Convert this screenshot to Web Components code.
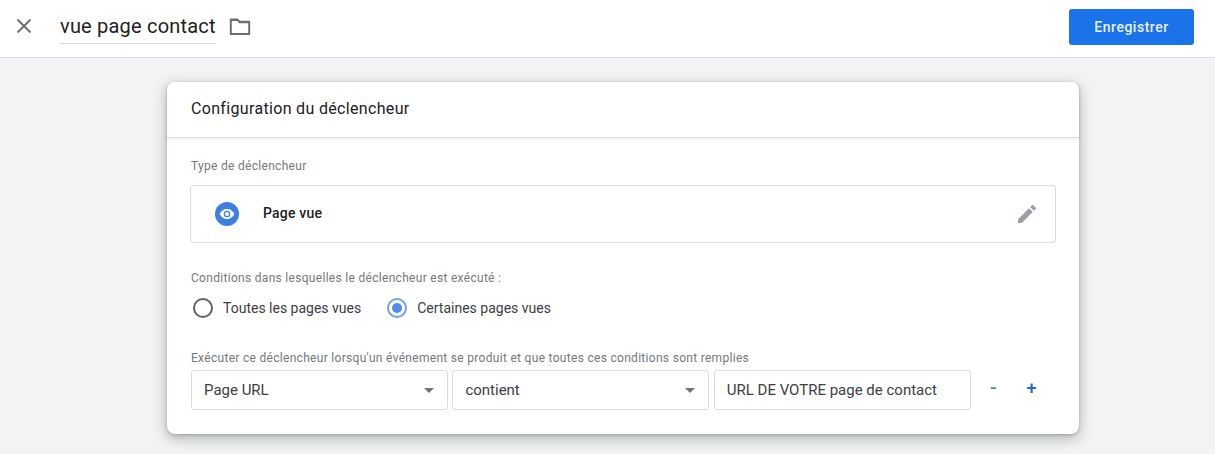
<!DOCTYPE html>
<html lang="fr">
<head>
<meta charset="utf-8">
<title>vue page contact</title>
<style>
    html, body { margin: 0; height: 100%; overflow: hidden; }
    body { background: #f1f3f4; font-family: Roboto, "Liberation Sans", sans-serif; }
</style>
</head>
<body>
<app-header name="vue page contact" action="Enregistrer"></app-header>
<trigger-card heading="Configuration du déclencheur">
    <field-label>Type de déclencheur</field-label>
    <trigger-type label="Page vue"></trigger-type>
    <field-label style="margin-top:27px">Conditions dans lesquelles le déclencheur est exécuté :</field-label>
    <radio-group style="margin-top:10px">
        <radio-option>Toutes les pages vues</radio-option>
        <radio-option checked>Certaines pages vues</radio-option>
    </radio-group>
    <field-label style="margin-top:30px">Exécuter ce déclencheur lorsqu'un événement se produit et que toutes ces conditions sont remplies</field-label>
    <filter-row style="margin-top:4px">
        <select-box arrow>Page URL</select-box>
        <select-box arrow>contient</select-box>
        <select-box>URL DE VOTRE page de contact</select-box>
    </filter-row>
</trigger-card>

<script>
class AppHeader extends HTMLElement {
    constructor() {
        super();
        this.attachShadow({ mode: "open" });
    }

    connectedCallback() {
        this.shadowRoot.innerHTML = `
            <style>
                :host {
                    display: flex;
                    align-items: center;
                    height: 57px;
                    background: #fff;
                    border-bottom: 1px solid #dadce0;
                    padding: 0 21px 0 16px;
                }
                .close { width: 16px; height: 16px; flex: none; margin-top: -5px; }
                .name {
                    margin-left: 28px;
                    margin-top: -1px;
                    height: 32px;
                    line-height: 29px;
                    box-sizing: border-box;
                    border-bottom: 1px solid #dadce0;
                    font-size: 20px;
                    letter-spacing: .2px;
                    color: #212121;
                    white-space: nowrap;
                }
                .folder { width: 26px; height: 26px; flex: none; margin: -3px 0 0 11px; }
                button {
                    margin-left: auto;
                    margin-top: -4px;
                    width: 125px;
                    height: 36px;
                    border: 0;
                    border-radius: 3px;
                    background: #1a73e8;
                    color: #e8f0fe;
                    font: 500 14px Roboto, "Liberation Sans", sans-serif;
                    letter-spacing: .52px;
                }
            </style>
            <svg class="close" viewBox="0 0 16 16"><path d="M1.500 1.500l13 13M14.500 1.500l-13 13" stroke="#6f7175" stroke-width="2" fill="none"/></svg>
            <div class="name">${this.getAttribute("name")}</div>
            <svg class="folder" viewBox="0 0 24 24"><path d="M3.500 5h6l2 2.200h9v11.300h-17z" fill="none" stroke="#6b6d70" stroke-width="1.800" stroke-linejoin="round"/><path d="M3.500 6h6.500l1.500 2h9" fill="none" stroke="#6b6d70" stroke-width="1"/></svg>
            <button>${this.getAttribute("action")}</button>
        `;
    }
}

class TriggerCard extends HTMLElement {
    constructor() {
        super();
        this.attachShadow({ mode: "open" });
    }

    connectedCallback() {
        this.shadowRoot.innerHTML = `
            <style>
                :host {
                    display: block;
                    width: 912px;
                    margin: 24px 0 0 167px;
                    background: #fff;
                    border-radius: 8px;
                    box-shadow: 0 4px 14px rgba(60, 64, 67, .38), 0 1px 3px rgba(60, 64, 67, .25);
                }
                h2 {
                    margin: 0;
                    height: 56px;
                    box-sizing: border-box;
                    padding: 0 24px;
                    line-height: 54px;
                    font-size: 16px;
                    font-weight: 400;
                    color: #212121;
                    border-bottom: 1px solid #dadce0;
                    box-shadow: 0 2px 3px rgba(60, 64, 67, .08);
                    letter-spacing: .33px;
                }
                .body { padding: 20px 24px 24px; }
            </style>
            <h2>${this.getAttribute("heading")}</h2>
            <div class="body"><slot></slot></div>
        `;
    }
}

class FieldLabel extends HTMLElement {
    constructor() {
        super();
        this.attachShadow({ mode: "open" });
        this.shadowRoot.innerHTML = `
            <style>
                :host {
                    display: block;
                    font-size: 12px;
                    line-height: 16px;
                    letter-spacing: .3px;
                    color: #75787c;
                }
            </style>
            <slot></slot>
        `;
    }
}

class TriggerType extends HTMLElement {
    constructor() {
        super();
        this.attachShadow({ mode: "open" });
    }

    connectedCallback() {
        this.shadowRoot.innerHTML = `
            <style>
                :host {
                    display: flex;
                    align-items: center;
                    height: 58px;
                    margin: 11px -1px 0;
                    box-sizing: border-box;
                    border: 1px solid #dadce0;
                    border-radius: 3px;
                    padding: 0 16px 0 24px;
                }
                .badge {
                    width: 24px;
                    height: 24px;
                    border-radius: 50%;
                    background: #3f7fe0;
                    display: flex;
                    align-items: center;
                    justify-content: center;
                    flex: none;
                }
                .label {
                    margin-left: 24px;
                    margin-top: -2px;
                    font-size: 14px;
                    font-weight: 500;
                    letter-spacing: .2px;
                    color: #212121;
                }
                .edit { margin-left: auto; width: 24px; height: 24px; }
            </style>
            <span class="badge">
                <svg width="16" height="16" viewBox="0 0 24 24"><path fill="#fff" d="M12 4.500C7 4.500 2.700 7.600 1 12c1.700 4.400 6 7.500 11 7.500s9.300-3.100 11-7.500c-1.700-4.400-6-7.500-11-7.500zm0 12.500a5 5 0 1 1 0-10 5 5 0 0 1 0 10zm0-8a3 3 0 1 0 0 6 3 3 0 0 0 0-6z"/></svg>
            </span>
            <span class="label">${this.getAttribute("label")}</span>
            <svg class="edit" viewBox="0 0 24 24"><path fill="#9aa0a6" d="M3 17.250V21h3.750L17.810 9.940l-3.750-3.750L3 17.250zM20.710 7.040a1 1 0 0 0 0-1.410l-2.340-2.340a1 1 0 0 0-1.410 0l-1.830 1.830 3.750 3.750 1.830-1.830z"/></svg>
        `;
    }
}

class RadioGroup extends HTMLElement {
    constructor() {
        super();
        this.attachShadow({ mode: "open" });
        this.shadowRoot.innerHTML = `
            <style>
                :host { display: flex; gap: 26px; padding-left: 2px; }
            </style>
            <slot></slot>
        `;
    }
}

class RadioOption extends HTMLElement {
    constructor() {
        super();
        this.attachShadow({ mode: "open" });
    }

    connectedCallback() {
        const on = this.hasAttribute("checked");
        this.shadowRoot.innerHTML = `
            <style>
                :host {
                    display: flex;
                    align-items: center;
                    gap: 10px;
                    height: 24px;
                    font-size: 14px;
                    color: #3c4043;
                }
                .dot {
                    width: 20px;
                    height: 20px;
                    box-sizing: border-box;
                    border-radius: 50%;
                    border: 2px solid ${on ? "#6f9fe8" : "#5f6368"};
                    display: flex;
                    align-items: center;
                    justify-content: center;
                }
                .dot i { width: 10px; height: 10px; border-radius: 50%; background: #4f8bea; display: ${on ? "block" : "none"}; }
            </style>
            <span class="dot"><i></i></span>
            <slot></slot>
        `;
    }
}

class FilterRow extends HTMLElement {
    constructor() {
        super();
        this.attachShadow({ mode: "open" });
        this.shadowRoot.innerHTML = `
            <style>
                :host { display: flex; align-items: center; gap: 4.400px; }
                .btn {
                    color: #1a6fc4;
                    font-size: 18px;
                    font-weight: 500;
                    width: 30px;
                    text-align: center;
                    margin-top: -6px;
                }
                .minus { margin-left: 3px; color: #4a7fb0; font-size: 22px; font-weight: 400; }
                .plus { margin-left: 4px; }
            </style>
            <slot></slot>
            <span class="btn minus">-</span>
            <span class="btn plus">+</span>
        `;
    }
}

class SelectBox extends HTMLElement {
    constructor() {
        super();
        this.attachShadow({ mode: "open" });
    }

    connectedCallback() {
        const arrow = this.hasAttribute("arrow") ? `<span class="arrow"></span>` : "";
        this.shadowRoot.innerHTML = `
            <style>
                :host {
                    display: flex;
                    align-items: center;
                    justify-content: space-between;
                    width: 257px;
                    height: 40px;
                    box-sizing: border-box;
                    border: 1px solid #dadce0;
                    border-radius: 3px;
                    padding: 0 13px 0 12px;
                    font-size: 15px;
                    color: #3c4043;
                    white-space: nowrap;
                }
                .arrow {
                    width: 0;
                    height: 0;
                    border: 5px solid transparent;
                    border-top-color: #757575;
                    border-bottom: 0;
                }
            </style>
            <slot></slot>${arrow}
        `;
    }
}

customElements.define("app-header", AppHeader);
customElements.define("trigger-card", TriggerCard);
customElements.define("field-label", FieldLabel);
customElements.define("trigger-type", TriggerType);
customElements.define("radio-group", RadioGroup);
customElements.define("radio-option", RadioOption);
customElements.define("filter-row", FilterRow);
customElements.define("select-box", SelectBox);
</script>
</body>
</html>
